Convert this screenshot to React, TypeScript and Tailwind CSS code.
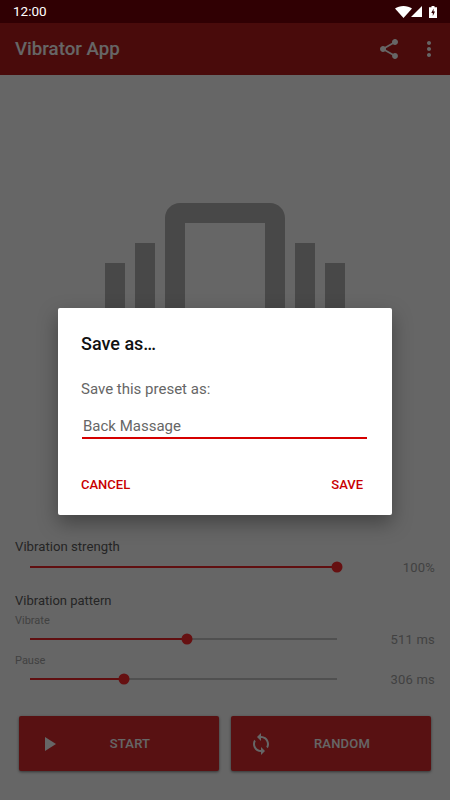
const SHARE_PATH =
  'M18 16.08c-.76 0-1.44.3-1.96.77L8.91 12.7c.05-.23.09-.46.09-.7s-.04-.47-.09-.7l7.05-4.11c.54.5 1.25.81 2.04.81 1.66 0 3-1.34 3-3s-1.34-3-3-3-3 1.34-3 3c0 .24.04.47.09.7L8.04 9.81C7.5 9.31 6.79 9 6 9c-1.66 0-3 1.34-3 3s1.34 3 3 3c.79 0 1.5-.31 2.04-.81l7.12 4.16c-.05.21-.08.43-.08.65 0 1.61 1.31 2.92 2.92 2.92 1.61 0 2.92-1.31 2.92-2.92s-1.31-2.92-2.92-2.92z';
const MORE_PATH =
  'M12 8c1.1 0 2-.9 2-2s-.9-2-2-2-2 .9-2 2 .9 2 2 2zm0 2c-1.1 0-2 .9-2 2s.9 2 2 2 2-.9 2-2-.9-2-2-2zm0 6c-1.1 0-2 .9-2 2s.9 2 2 2 2-.9 2-2-.9-2-2-2z';
const VIBRATION_PATH =
  'M0 15h2V9H0v6zm3 2h2V7H3v10zm19-8v6h2V9h-2zm-3 8h2V7h-2v10zM16.5 3h-9C6.67 3 6 3.67 6 4.5v15c0 .83.67 1.5 1.5 1.5h9c.83 0 1.5-.67 1.5-1.5v-15c0-.83-.67-1.5-1.5-1.5zM16 19H8V5h8v14z';
const SYNC_PATH =
  'M12 4V1L8 5l4 4V6c3.31 0 6 2.69 6 6 0 1.01-.25 1.97-.7 2.8l1.46 1.46C19.54 15.03 20 13.57 20 12c0-4.42-3.58-8-8-8zm0 14c-3.31 0-6-2.69-6-6 0-1.01.25-1.97.7-2.8L5.24 7.74C4.46 8.97 4 10.43 4 12c0 4.42 3.58 8 8 8v3l4-4-4-4v3z';

function Icon({ d, className }: { d: string; className?: string }) {
  return (
    <svg viewBox="0 0 24 24" className={className} fill="currentColor">
      <path d={d} />
    </svg>
  );
}

function StatusBar() {
  return (
    <div className="h-[23px] shrink-0 bg-[#300003] flex items-center justify-between pl-[13px] pr-[13px] text-white">
      <span className="text-[13.500px] leading-none">12:00</span>
      <div className="flex items-center">
        <svg viewBox="0 0 17 12" className="w-[17px] h-[12px]" fill="currentColor">
          <path d="M0 2.6C2.3 .9 5.2 0 8.5 0s6.200 .9 8.500 2.600L8.500 12z" />
        </svg>
        <svg viewBox="0 0 11 11" className="w-[11px] h-[11px] -ml-[1px]" fill="currentColor">
          <path d="M11 0v11H0z" />
        </svg>
        <svg viewBox="0 0 8 12" className="w-[8px] h-[12px] ml-[7px]">
          <path d="M2.500 0h3v1.200H8V12H0V1.200h2.500z" fill="#fff" />
          <path d="M4.600 2.500L2.300 7h1.500v3l2.200-4.500H4.500z" fill="#300003" />
        </svg>
      </div>
    </div>
  );
}

function SliderRow({ percent, value }: { percent: number; value: string }) {
  return (
    <div className="h-[20px] flex items-center">
      <div className="relative ml-[15px] w-[307px] h-[2px] bg-[#c8c8c8]">
        <div className="h-full bg-[#f0262a]" style={{ width: `${percent}%` }} />
        <div
          className="absolute top-1/2 w-[11px] h-[11px] -translate-x-1/2 -translate-y-1/2 rounded-full bg-[#ff282c]"
          style={{ left: `${percent}%` }}
        />
      </div>
      <span className="ml-auto text-[13px] leading-none text-[#a4a4a4] tracking-[0.2px]">{value}</span>
    </div>
  );
}

function ActionButton({ icon, label }: { icon: string; label: string }) {
  return (
    <button className="flex-1 h-[55px] flex items-center pl-[18px] pr-[20px] rounded-[2px] bg-[#dc2c2f] text-white shadow-[0_1px_3px_rgba(0,0,0,0.5)]">
      <Icon d={icon} className="w-6 h-6" />
      <span className="flex-1 text-center text-[13px] font-medium tracking-[0.2px] pt-[1px]">{label}</span>
    </button>
  );
}

export default function App() {
  return (
    <div className="w-[450px] h-[800px] flex flex-col overflow-hidden bg-white font-['Roboto',sans-serif]">
      <StatusBar />

      <div className="relative flex-1 flex flex-col min-h-0">
        {/* App bar */}
        <div className="h-[52px] shrink-0 bg-[#b71c1c] flex items-center pl-[15px] pr-[9px] text-white">
          <h1 className="text-[18.700px] font-medium">Vibrator App</h1>
          <Icon d={SHARE_PATH} className="w-6 h-6 ml-auto" />
          <Icon d={MORE_PATH} className="w-6 h-6 ml-[16px]" />
        </div>

        {/* Preset picture */}
        <div className="flex-1 flex items-center justify-center pb-[28px]">
          <Icon d={VIBRATION_PATH} className="w-[240px] h-[240px] text-[#b4b4b4]" />
        </div>

        {/* Controls */}
        <div className="px-[15px] text-[#5c5c5c]">
          <p className="text-[13.200px] leading-[16px]">Vibration strength</p>
          <div className="mt-[2px]">
            <SliderRow percent={100} value="100%" />
          </div>
          <p className="mt-[16px] text-[13px] leading-[16px]">Vibration pattern</p>
          <p className="mt-[5px] text-[11px] leading-[14px] text-[#a4a4a4]">Vibrate</p>
          <div className="mt-[1px]">
            <SliderRow percent={51} value="511 ms" />
          </div>
          <p className="mt-[5px] text-[11px] leading-[14px] text-[#a4a4a4]">Pause</p>
          <div className="mt-[1px]">
            <SliderRow percent={30.600} value="306 ms" />
          </div>
        </div>

        {/* Buttons */}
        <div className="flex gap-[12px] pl-[19px] pr-[19px] pt-[27px] pb-[29px]">
          <ActionButton icon="M8 5v14l11-7z" label="START" />
          <ActionButton icon={SYNC_PATH} label="RANDOM" />
        </div>

        {/* Dialog + scrim */}
        <div className="absolute inset-0 bg-black/60 flex items-center justify-center">
          <div className="w-[334px] h-[207px] bg-white rounded-[2px] shadow-[0_8px_20px_rgba(0,0,0,0.35)] pt-[25px] px-[23px]">
            <h2 className="text-[18px] leading-[22px] font-medium text-[#111]">Save as…</h2>
            <p className="mt-[25px] text-[15px] leading-[18px] text-[#666]">Save this preset as:</p>
            <div className="mt-[18px] ml-[1px] w-[285px] border-b-2 border-[#d50000] pl-[1px] pb-[1px] text-[15px] leading-[20px] text-[#666]">
              Back Massage
            </div>
            <div className="mt-[38px] flex justify-between pr-[6px] text-[13px] leading-[16px] font-medium text-[#c80000]">
              <span>CANCEL</span>
              <span>SAVE</span>
            </div>
          </div>
        </div>
      </div>
    </div>
  );
}
